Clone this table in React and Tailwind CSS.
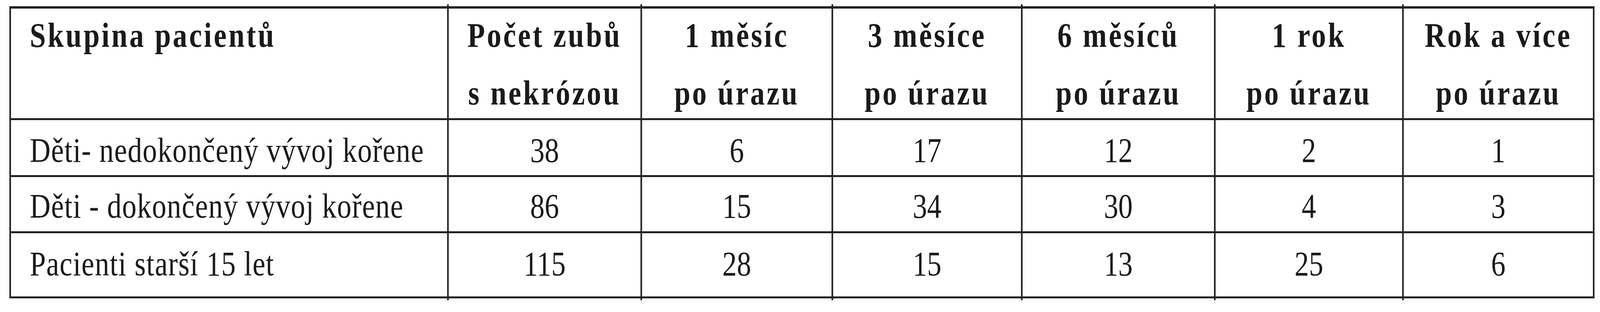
import React, { useEffect, useState } from 'react';

// table is drawn at 4949px wide; squeezed horizontally when the window is narrower
const DESIGN_WIDTH = 4949;

const header = [
    ['Skupina pacientů', ''],
    ['Počet zubů', 's nekrózou'],
    ['1 měsíc', 'po úrazu'],
    ['3 měsíce', 'po úrazu'],
    ['6 měsíců', 'po úrazu'],
    ['1 rok', 'po úrazu'],
    ['Rok a více', 'po úrazu'],
];

const rows = [
    { label: 'Děti- nedokončený vývoj kořene', values: ['38', '6', '17', '12', '2', '1'], h: 'h-[146px] pt-[33px]' },
    { label: 'Děti - dokončený vývoj kořene', values: ['86', '15', '34', '30', '4', '3'], h: 'h-[144px] pt-[30px]' },
    { label: 'Pacienti starší 15 let', values: ['115', '28', '15', '13', '25', '6'], h: 'h-[167px] pt-[34px]' },
];

const tickTop = ' after:absolute after:right-[-5px] after:top-[-11px] after:w-[5px] after:h-[11px] after:bg-[#222]';
const tickBottom = ' after:absolute after:right-[-5px] after:bottom-[-10px] after:w-[5px] after:h-[10px] after:bg-[#222]';

const App = () => {
    const [sx, setSx] = useState(() => Math.min(1, window.innerWidth / DESIGN_WIDTH));

    useEffect(() => {
        const onResize = () => setSx(Math.min(1, window.innerWidth / DESIGN_WIDTH));
        window.addEventListener('resize', onResize);
        return () => window.removeEventListener('resize', onResize);
    }, []);

    return (
        <div className="w-full h-[800px] overflow-hidden bg-white">
            <div
                className="w-[4949px] h-[800px] pt-[16px] pl-[29px] text-[#1a1a1a] font-['Liberation_Serif','Times_New_Roman',serif] text-[89px]"
                style={{ transform: `scaleX(${sx})`, transformOrigin: 'top left' }}
            >
                <div className="grid grid-cols-[1354px_598px_591px_586px_597px_582px_590px] w-[4903px] border-l-[5px] border-t-[6px] border-[#222]">
                    {header.map((cell, i) => (
                        <div
                            key={'h' + i}
                            className={
                                'relative h-[286px] border-r-[5px] border-b-[5px] border-[#222] font-bold tracking-[6px] leading-[148px] ' +
                                (i === 0 ? 'pl-[58px] text-left' : 'text-center') +
                                (i < 6 ? tickTop : '')
                            }
                        >
                            <div className="-mt-[6px]">
                                <div className="whitespace-nowrap">{cell[0]}</div>
                                {cell[1] && <div className="whitespace-nowrap">{cell[1]}</div>}
                            </div>
                        </div>
                    ))}
                    {rows.map((row, r) => (
                        <React.Fragment key={'r' + r}>
                            <div
                                className={
                                    'relative border-r-[5px] border-b-[5px] border-[#222] pl-[58px] leading-[89px] tracking-[1.7px] whitespace-nowrap ' +
                                    row.h +
                                    (r === 2 ? tickBottom : '')
                                }
                            >
                                {row.label}
                            </div>
                            {row.values.map((v, i) => (
                                <div
                                    key={i}
                                    className={
                                        'relative border-r-[5px] border-b-[5px] border-[#222] text-center leading-[89px] ' +
                                        row.h +
                                        (r === 2 && i < 5 ? tickBottom : '')
                                    }
                                >
                                    {v}
                                </div>
                            ))}
                        </React.Fragment>
                    ))}
                </div>
            </div>
        </div>
    );
};

export default App;
